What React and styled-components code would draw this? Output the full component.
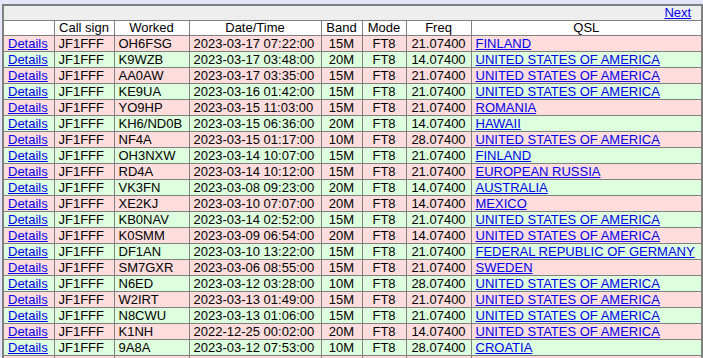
import React from 'react';
import styled, { createGlobalStyle } from 'styled-components';

const GlobalStyle = createGlobalStyle`
    body {
        margin: 0;
        background: #e6e6fa;
        font-family: "Liberation Sans", Arial, sans-serif;
    }
`

const Page = styled.div`
    padding: 4px 2px 0 2px;
`

const LogTable = styled.table`
    border-collapse: collapse;
    table-layout: fixed;
    width: 699px;
    border: 2px solid #808080;
    font-size: 13px;
    color: #000;
`

const Cell = styled.td`
    border: 1px solid #808080;
    padding: 0 4px;
    height: 15px;
    line-height: 15px;
    white-space: nowrap;
    overflow: hidden;
    text-align: ${p => p.align || 'left'};
`

const HeadCell = styled(Cell)`
    text-align: center;
    font-weight: normal;
    height: 14px;
    line-height: 14px;
`

const NavRow = styled.tr`
    background: #eeeeee;
`

const NavCell = styled(Cell)`
    text-align: right;
    padding-right: 10px;
    height: 14px;
    line-height: 14px;
`

const HeadRow = styled.tr`
    background: #ffffff;
`

const DataRow = styled.tr`
    background: ${p => (p.odd ? '#ffdddd' : '#ddffdd')};
`

const Link = styled.a`
    color: #0000ee;
    text-decoration: underline;
    cursor: pointer;
`

const USA = 'UNITED STATES OF AMERICA';

const rows = [
    ['OH6FSG', '2023-03-17 07:22:00', '15M', '21.07400', 'FINLAND'],
    ['K9WZB', '2023-03-17 03:48:00', '20M', '14.07400', USA],
    ['AA0AW', '2023-03-17 03:35:00', '15M', '21.07400', USA],
    ['KE9UA', '2023-03-16 01:42:00', '15M', '21.07400', USA],
    ['YO9HP', '2023-03-15 11:03:00', '15M', '21.07400', 'ROMANIA'],
    ['KH6/ND0B', '2023-03-15 06:36:00', '20M', '14.07400', 'HAWAII'],
    ['NF4A', '2023-03-15 01:17:00', '10M', '28.07400', USA],
    ['OH3NXW', '2023-03-14 10:07:00', '15M', '21.07400', 'FINLAND'],
    ['RD4A', '2023-03-14 10:12:00', '15M', '21.07400', 'EUROPEAN RUSSIA'],
    ['VK3FN', '2023-03-08 09:23:00', '20M', '14.07400', 'AUSTRALIA'],
    ['XE2KJ', '2023-03-10 07:07:00', '20M', '14.07400', 'MEXICO'],
    ['KB0NAV', '2023-03-14 02:52:00', '15M', '21.07400', USA],
    ['K0SMM', '2023-03-09 06:54:00', '20M', '14.07400', USA],
    ['DF1AN', '2023-03-10 13:22:00', '15M', '21.07400', 'FEDERAL REPUBLIC OF GERMANY'],
    ['SM7GXR', '2023-03-06 08:55:00', '15M', '21.07400', 'SWEDEN'],
    ['N6ED', '2023-03-12 03:28:00', '10M', '28.07400', USA],
    ['W2IRT', '2023-03-13 01:49:00', '15M', '21.07400', USA],
    ['N8CWU', '2023-03-13 01:06:00', '15M', '21.07400', USA],
    ['K1NH', '2022-12-25 00:02:00', '20M', '14.07400', USA],
    ['9A8A', '2023-03-12 07:53:00', '10M', '28.07400', 'CROATIA'],
];

const colWidths = [51, 60, 75, 132, 41, 44, 65, 231];
const headers = ['', 'Call sign', 'Worked', 'Date/Time', 'Band', 'Mode', 'Freq', 'QSL'];

export default function App() {
    return (
        <Page>
            <GlobalStyle />
            <LogTable>
                <colgroup>
                    {colWidths.map((w, i) => <col key={i} style={{ width: w }} />)}
                </colgroup>
                <tbody>
                    <NavRow>
                        <NavCell colSpan={8}><Link>Next</Link></NavCell>
                    </NavRow>
                    <HeadRow>
                        {headers.map((h, i) => <HeadCell as="th" key={i}>{h}</HeadCell>)}
                    </HeadRow>
                    {rows.map((r, i) => (
                        <DataRow key={i} odd={i % 2 === 0}>
                            <Cell><Link>Details</Link></Cell>
                            <Cell>JF1FFF</Cell>
                            <Cell>{r[0]}</Cell>
                            <Cell>{r[1]}</Cell>
                            <Cell align="center">{r[2]}</Cell>
                            <Cell align="center">FT8</Cell>
                            <Cell align="center">{r[3]}</Cell>
                            <Cell><Link>{r[4]}</Link></Cell>
                        </DataRow>
                    ))}
                    {/* next row continues below the fold */}
                    <DataRow odd>
                        {headers.map((h, i) => <Cell key={i} />)}
                    </DataRow>
                </tbody>
            </LogTable>
        </Page>
    );
}
